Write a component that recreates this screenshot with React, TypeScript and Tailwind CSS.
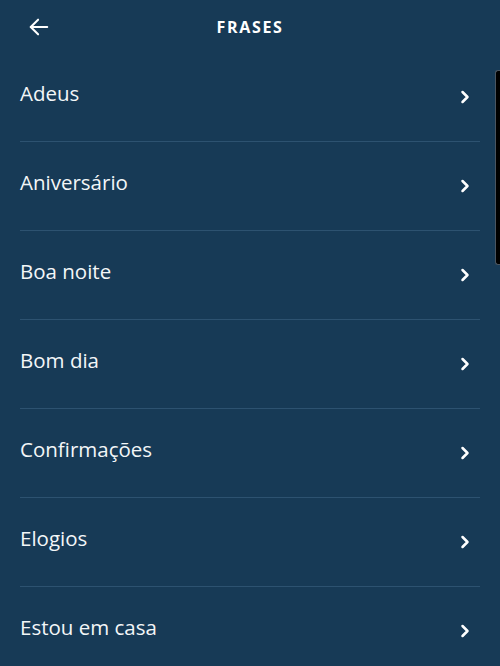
import { ChevronRight } from 'lucide-react';

const phrases = [
  'Adeus',
  'Aniversário',
  'Boa noite',
  'Bom dia',
  'Confirmações',
  'Elogios',
  'Estou em casa',
];

export default function App() {
  return (
    <div
      className="relative h-[666px] w-[500px] overflow-hidden bg-[#173a56] text-white"
      style={{ fontFamily: '"Open Sans", "Noto Sans", sans-serif' }}
    >
      <header className="relative flex h-[53px] items-center justify-center">
        <button type="button" className="absolute left-[28px] top-[16px] p-0" aria-label="Voltar">
          <svg width="22" height="22" viewBox="0 0 24 24" fill="none" stroke="white" strokeWidth="2.2" strokeLinecap="round" strokeLinejoin="round">
            <path d="M21 12H3" />
            <path d="M11 4l-8 8 8 8" />
          </svg>
        </button>
        <h1 className="text-[16px] font-bold tracking-[1.7px]">FRASES</h1>
      </header>

      <ul className="mx-5">
        {phrases.map((p) => (
          <li
            key={p}
            className="flex h-[89px] items-center justify-between border-b border-[#2d5270] pb-[7px] pr-[5px]"
          >
            <span className="text-[20.5px] text-[#f3f6f8]">{p}</span>
            <ChevronRight className="mt-[6px] h-[20px] w-[20px]" strokeWidth={3} />
          </li>
        ))}
      </ul>

      <div className="absolute right-0 top-[70px] h-[195px] w-[5px] rounded-l-[3px] border border-r-0 border-[#4a5560] bg-black" />
    </div>
  );
}
